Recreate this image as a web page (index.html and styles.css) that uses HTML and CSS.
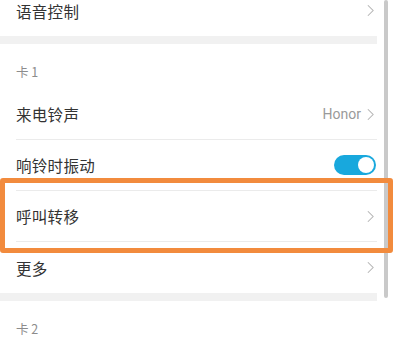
FILE: index.html
```html
<!DOCTYPE html>
<html lang="zh">
<head>
<meta charset="utf-8">
<link rel="stylesheet" href="styles.css">
</head>
<body>
<div class="screen">
  <div class="content">
    <div class="group">
      <div class="row"><span class="label">语音控制</span><span class="right"><svg class="chev" viewBox="0 0 8 14"><polyline points="1,1 7,7 1,13"/></svg></span></div>
    </div>
    <div class="band"></div>
    <div class="group">
      <div class="header">卡 1</div>
      <div class="row divided"><span class="label">来电铃声</span><span class="right"><span class="value">Honor</span><svg class="chev" viewBox="0 0 8 14"><polyline points="1,1 7,7 1,13"/></svg></span></div>
      <div class="row divided"><span class="label">响铃时振动</span><span class="right"><span class="toggle"><span class="knob"></span></span></span></div>
      <div class="row divided"><span class="label">呼叫转移</span><span class="right"><svg class="chev" viewBox="0 0 8 14"><polyline points="1,1 7,7 1,13"/></svg></span></div>
      <div class="row"><span class="label">更多</span><span class="right"><svg class="chev" viewBox="0 0 8 14"><polyline points="1,1 7,7 1,13"/></svg></span></div>
    </div>
    <div class="band"></div>
    <div class="group">
      <div class="header">卡 2</div>
    </div>
  </div>
  <div class="scrollbar"></div>
  <div class="highlight"></div>
</div>
</body>
</html>
```
FILE: styles.css
```css
html, body {
  margin: 0;
  padding: 0;
  background: #ffffff;
}
body {
  font-family: "Noto Sans CJK SC", "Noto Sans", sans-serif;
  color: #333333;
}
.screen {
  position: relative;
  width: 395px;
  height: 348px;
  overflow: hidden;
}
.content {
  margin-top: -15px;
  padding-right: 18px;
}
.group {
  padding-left: 16px;
}
.row {
  height: 51px;
  display: flex;
  align-items: center;
  justify-content: space-between;
  box-sizing: border-box;
}
.row.divided {
  border-bottom: 1px solid #ebebeb;
}
.label {
  font-size: 15.5px;
  color: #333333;
  letter-spacing: 0.3px;
}
.right {
  display: flex;
  align-items: center;
  gap: 6px;
  padding-right: 3px;
}
.value {
  font-family: "Roboto", "Noto Sans", sans-serif;
  font-size: 14px;
  color: #9a9a9a;
}
.chev {
  width: 7px;
  height: 13px;
  fill: none;
  stroke: #b4b4b4;
  stroke-width: 1.2;
}
.band {
  height: 8px;
  background: #f1f1f1;
}
.header {
  height: 45px;
  box-sizing: border-box;
  padding-top: 19px;
  font-size: 12.5px;
  line-height: 18px;
  color: #8c8c8c;
}
.toggle {
  width: 42px;
  height: 20px;
  border-radius: 10px;
  background: #18a8dd;
  display: flex;
  align-items: center;
  justify-content: flex-end;
  padding: 0 2px;
  box-sizing: border-box;
  margin-right: -2px;
}
.knob {
  width: 16px;
  height: 16px;
  border-radius: 50%;
  background: #ffffff;
}
.scrollbar {
  position: absolute;
  left: 384px;
  top: 0;
  width: 4px;
  height: 298px;
  border-radius: 2px;
  background: #c9c9c9;
}
.highlight {
  position: absolute;
  left: 0;
  top: 178px;
  width: 393px;
  height: 75px;
  box-sizing: border-box;
  border: 5px solid #f28b3d;
  border-radius: 3px;
}
```
